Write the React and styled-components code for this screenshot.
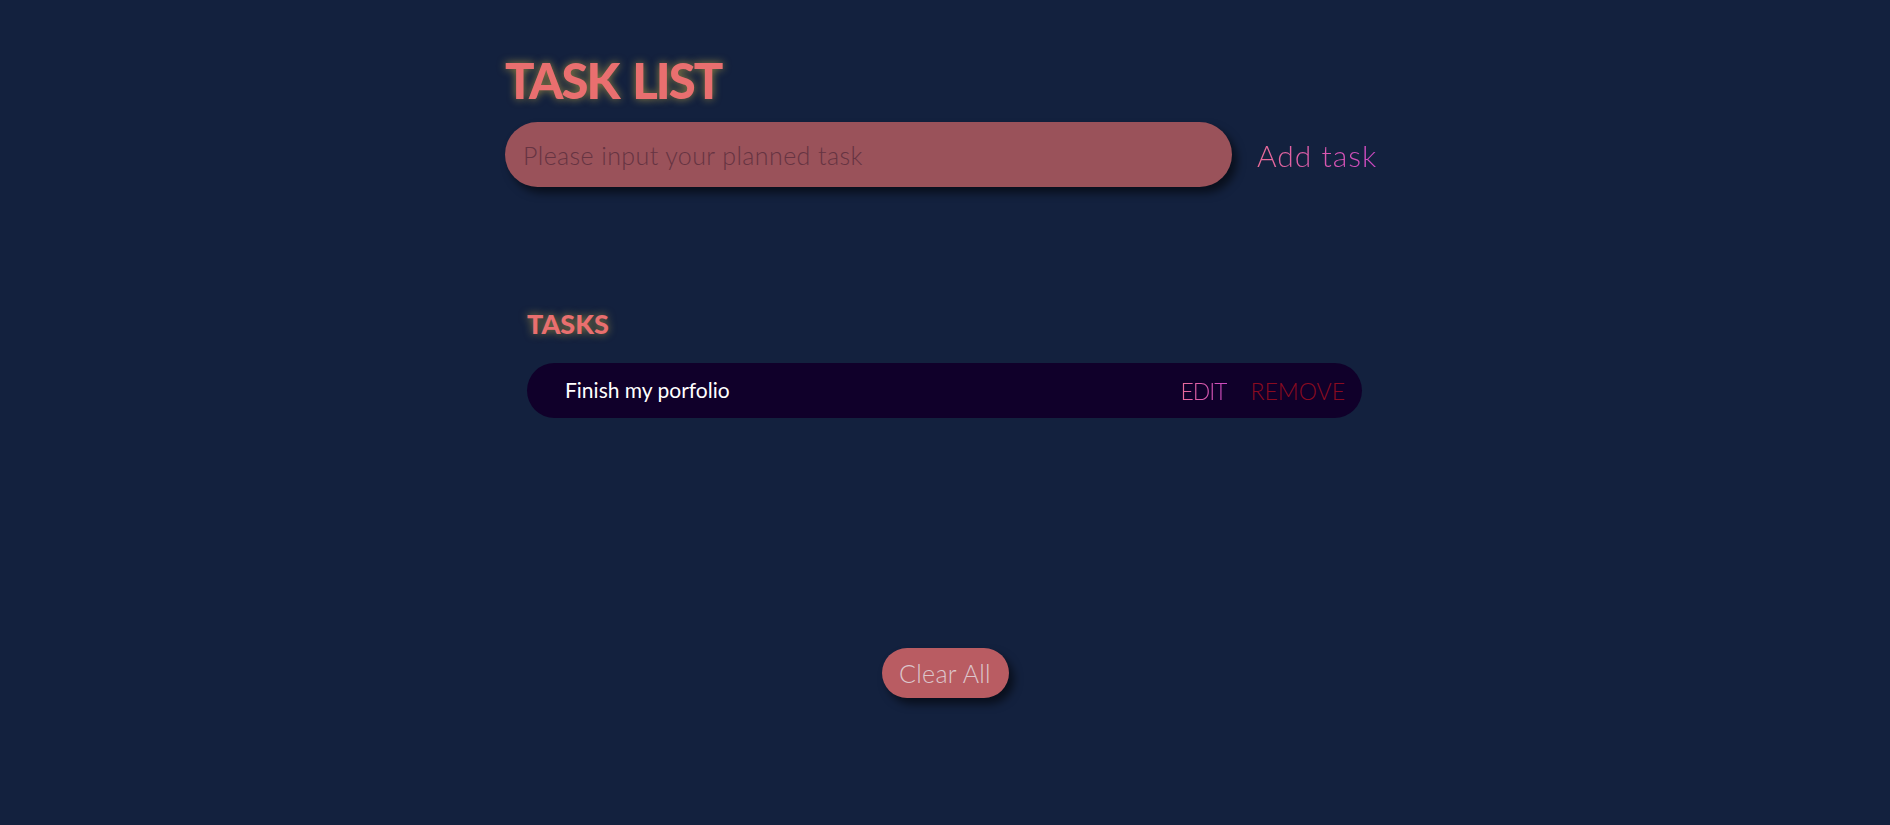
import React, { useState } from "react";
import styled, { createGlobalStyle } from "styled-components";

const GlobalStyle = createGlobalStyle`
  body {
    margin: 0;
    background-color: #13213e;
    font-family: "Century Gothic", "Lato", "Liberation Sans", sans-serif;
  }
`;

const Page = styled.div`
  min-height: 100vh;
  display: flex;
  flex-direction: column;
  align-items: center;
`;

const Container = styled.div`
  width: 880px;
  padding-top: 52px;
  display: flex;
  flex-direction: column;
`;

const Title = styled.h1`
  margin: 0 0 14px;
  font-size: 49px;
  line-height: 56px;
  letter-spacing: -2px;
  word-spacing: 4px;
  font-weight: 900;
  color: #e96f6f;
  text-shadow: 0 0 9px rgba(235, 200, 70, 0.6);
`;

const InputRow = styled.div`
  display: flex;
  align-items: center;
`;

const Input = styled.input`
  width: 727px;
  height: 65px;
  box-sizing: border-box;
  border: none;
  outline: none;
  border-radius: 33px;
  padding: 0 18px;
  background-color: #9a525a;
  box-shadow: 5px 6px 8px rgba(0, 0, 0, 0.55);
  font-family: inherit;
  font-weight: 300;
  font-size: 25px;
  letter-spacing: 0.4px;
  color: #3d1828;

  &::placeholder {
    color: #663442;
  }
`;

const GradientButton = styled.button`
  background: linear-gradient(90deg, #ea6c98, #cc48c2);
  -webkit-background-clip: text;
  background-clip: text;
  color: transparent;
  border: none;
  padding: 0;
  cursor: pointer;
  font-family: inherit;
  font-weight: 300;
  font-size: ${(p) => p.size || 30}px;
  letter-spacing: ${(p) => p.spacing || 0}px;
`;

const AddButton = styled(GradientButton)`
  margin-left: 25px;
`;

const TasksSection = styled.div`
  margin-top: 120px;
  padding: 0 23px 0 22px;
`;

const TasksHeading = styled.h2`
  margin: 0 0 22px;
  font-size: 27px;
  line-height: 34px;
  font-weight: 900;
  color: #e96f6f;
  text-shadow: 0 0 8px rgba(235, 200, 70, 0.6);
`;

const TaskRow = styled.div`
  display: flex;
  align-items: center;
  height: 55px;
  border-radius: 28px;
  background-color: #10002a;
  padding: 0 17px 0 38px;
`;

const TaskText = styled.span`
  flex: 1;
  margin-top: -2px;
  font-size: 21px;
  font-weight: 400;
  color: #ffffff;
`;

const RemoveButton = styled.button`
  margin-left: 24px;
  background: none;
  border: none;
  padding: 0;
  cursor: pointer;
  font-family: inherit;
  font-weight: 300;
  font-size: 23px;
  color: #8a0b20;
`;

const ClearButton = styled.button`
  align-self: center;
  margin-top: 230px;
  width: 127px;
  height: 50px;
  border: none;
  border-radius: 25px;
  background-color: #b95c62;
  box-shadow: 5px 6px 8px rgba(0, 0, 0, 0.55);
  color: #dcc6cc;
  font-family: inherit;
  font-weight: 300;
  font-size: 25px;
  letter-spacing: 0.3px;
  cursor: pointer;
`;

export default function App() {
  const [tasks, setTasks] = useState([{ id: 1, text: "Finish my porfolio" }]);
  const [value, setValue] = useState("");

  const addTask = () => {
    if (!value.trim()) return;
    setTasks([...tasks, { id: Date.now(), text: value }]);
    setValue("");
  };

  return (
    <Page>
      <GlobalStyle />
      <Container>
        <Title>TASK LIST</Title>
        <InputRow>
          <Input
            placeholder="Please input your planned task"
            value={value}
            onChange={(e) => setValue(e.target.value)}
          />
          <AddButton spacing={1} onClick={addTask}>
            Add task
          </AddButton>
        </InputRow>
        <TasksSection>
          <TasksHeading>TASKS</TasksHeading>
          {tasks.map((task) => (
            <TaskRow key={task.id}>
              <TaskText>{task.text}</TaskText>
              <GradientButton size={23} spacing={-1}>
                EDIT
              </GradientButton>
              <RemoveButton
                onClick={() => setTasks(tasks.filter((t) => t.id !== task.id))}
              >
                REMOVE
              </RemoveButton>
            </TaskRow>
          ))}
        </TasksSection>
        <ClearButton onClick={() => setTasks([])}>Clear All</ClearButton>
      </Container>
    </Page>
  );
}
